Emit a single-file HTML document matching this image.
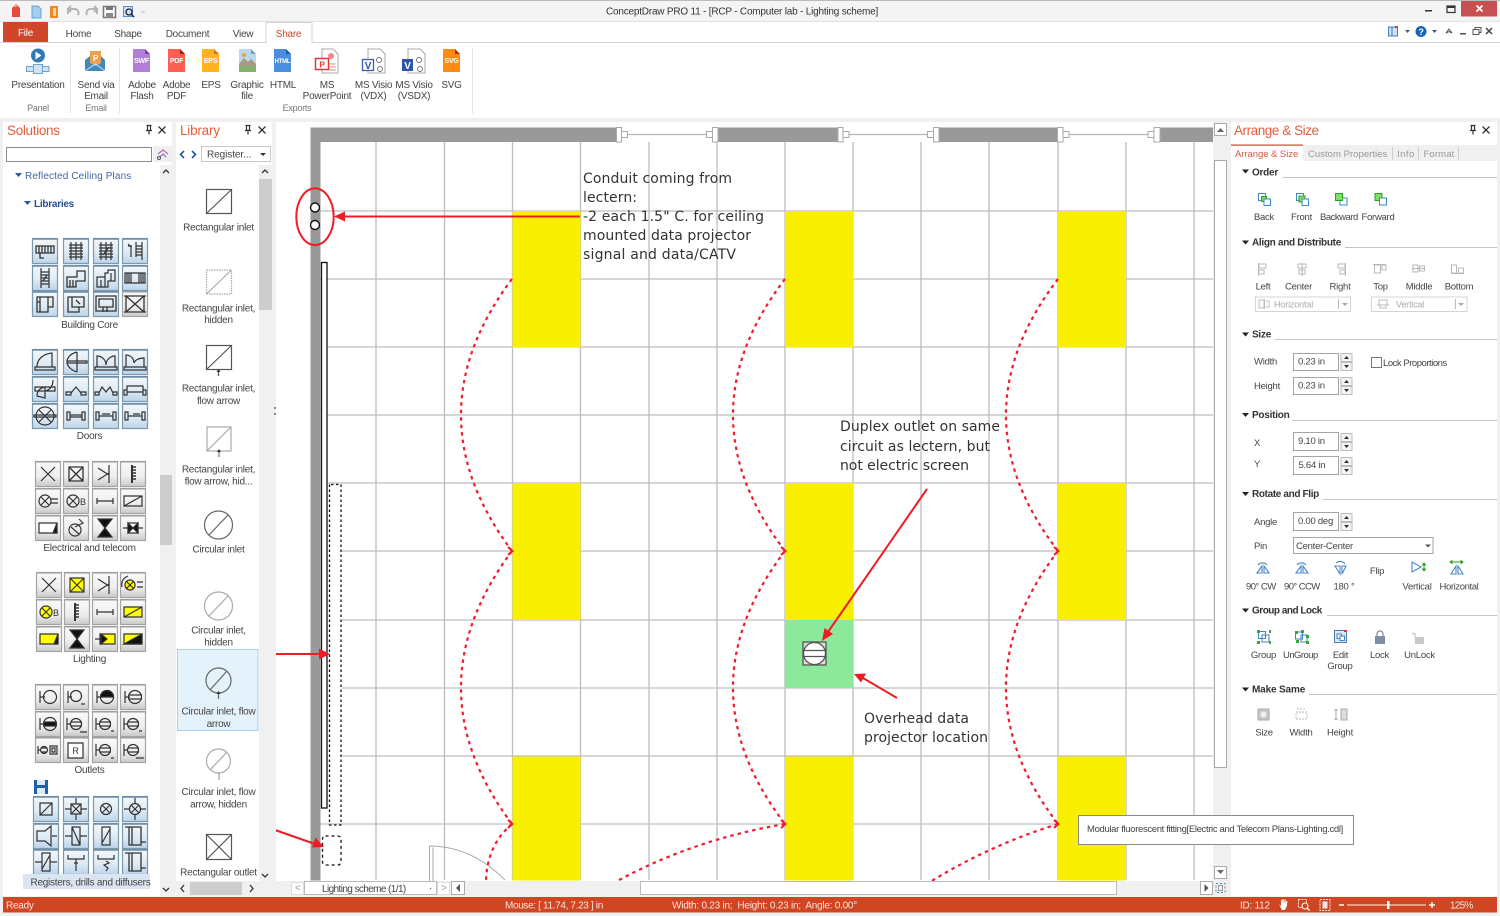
<!DOCTYPE html>
<html><head><meta charset="utf-8"><title>ConceptDraw PRO 11</title>
<style>
html,body{margin:0;padding:0;width:1500px;height:916px;overflow:hidden;background:#f0f0f0}
svg{display:block}
text{font-family:"Liberation Sans",sans-serif;font-size:10px;fill:#444;white-space:pre;letter-spacing:-.25px}
.m{text-anchor:middle}
.h{font-size:13.5px;fill:#e2603c;letter-spacing:0}
.b{font-weight:bold;fill:#333}
.w{fill:#fbe6de}
.d text{font-family:"DejaVu Sans",sans-serif;font-size:14px;fill:#333;letter-spacing:0}
.l{stroke:#bdbdbd;stroke-width:1.3;fill:none}
.r{stroke:#ee1c25;stroke-width:2;fill:none}
.rd{stroke:#f01c30;stroke-width:2.2;fill:none;stroke-dasharray:3.5 4}
.i{stroke-width:1.2}
.i path,.i circle{fill:none;stroke:#333}
.f{fill:#fff;stroke:#a5a5a5}
</style></head><body>
<svg width="1500" height="916" viewBox="0 0 1500 916" xmlns="http://www.w3.org/2000/svg">
<defs>
<linearGradient id="gb" x1="0" y1="0" x2="0" y2="1"><stop offset="0" stop-color="#f3f8fc"/><stop offset=".55" stop-color="#dfeaf4"/><stop offset="1" stop-color="#bcd5ea"/></linearGradient>
<linearGradient id="gg" x1="0" y1="0" x2="0" y2="1"><stop offset="0" stop-color="#fafafa"/><stop offset=".6" stop-color="#eee"/><stop offset="1" stop-color="#c9c9c9"/></linearGradient>
<g id="tb"><rect x=".5" y=".5" width="25" height="25" fill="url(#gb)" stroke="#7b98ad"/><path d="M1 1h24" stroke="#6d8ba3" stroke-width="1.5"/></g>
<g id="tg"><rect x=".5" y=".5" width="25" height="25" fill="url(#gg)" stroke="#a4a4a4"/><path d="M1 1h24" stroke="#999" stroke-width="1"/></g>
<path id="doc" d="M0 0h12l5 5v18H0z"/>
<g id="spin"><rect x=".5" y=".5" width="11" height="8" fill="#f4f4f4" stroke="#bbb"/><rect x=".5" y="9.5" width="11" height="8" fill="#f4f4f4" stroke="#bbb"/><path d="M3.5 6l2.5-3 2.5 3zM3.5 12l2.5 3 2.5-3z" fill="#333"/></g>
<g id="pin"><path d="M-2.5 -4.5h5M-1.5 -4.5v5M1.5 -4.5v5M-3 .5h6M0 .5v4" stroke="#333" stroke-width="1.2" fill="none"/></g>
<g id="xx"><path d="M-3.5 -3.5l7 7M3.5 -3.5l-7 7" stroke="#333" stroke-width="1.3"/></g>
<g id="ord"><rect x="0" y="0" width="7" height="7" fill="#7ee25c" stroke="#2e9e2a"/><rect x="4.5" y="4.5" width="7" height="7" fill="#fff" stroke="#3f86c6"/></g>
<g id="ord2"><rect x="4.5" y="4.5" width="7" height="7" fill="#fff" stroke="#3f86c6"/><rect x="0" y="0" width="7" height="7" fill="#7ee25c" stroke="#2e9e2a"/></g>
</defs>

<!-- canvas -->
<rect x="276" y="122" width="938" height="759" fill="#fff"/>
<g class="l">
<path d="M376 142V880M444.5 142V880M649 142V880M717 142V880M921 142V880M989 142V880M1194 142V880M512.5 142V880M580.5 142V880M785 142V880M853 142V880M1058 142V880M1126 142V880"/>
<path d="M320 211H1213M320 279H1213M327 347H1213M327 415H1213M327 483H1213M342 551H1213M342 620H1213M342 688H1213M342 756H1213M320 824H1213"/>
</g>
<g fill="#f9ef00">
<rect x="512.5" y="211" width="68" height="136.500"/><rect x="512.500" y="483" width="68" height="137"/><rect x="512.500" y="756.500" width="68" height="124"/>
<rect x="785" y="211" width="68.500" height="136.500"/><rect x="785" y="483" width="68.500" height="137"/><rect x="785" y="756.500" width="68.500" height="124"/>
<rect x="1058" y="211" width="68" height="136.500"/><rect x="1058" y="483" width="68" height="137"/><rect x="1058" y="756.500" width="68" height="124"/>
</g>
<rect x="785" y="620" width="68.500" height="68" fill="#8ce99c"/>
<!-- walls -->
<rect x="310.500" y="127.500" width="10" height="753" fill="#999"/>
<g fill="#999"><rect x="310.500" y="127.500" width="306" height="14.500"/><rect x="718" y="127.500" width="120" height="14.500"/><rect x="939" y="127.500" width="118" height="14.500"/><rect x="1160" y="127.500" width="53.500" height="14.500"/></g>
<g fill="#fff" stroke="#aaa">
<rect x="616.500" y="127.500" width="5" height="14.500"/><rect x="621.500" y="131.500" width="6" height="6"/><rect x="706.500" y="131.500" width="6" height="6"/><rect x="712.500" y="127.500" width="5.500" height="14.500"/>
<rect x="838" y="127.500" width="5" height="14.500"/><rect x="843" y="131.500" width="6" height="6"/><rect x="927.500" y="131.500" width="6" height="6"/><rect x="933.500" y="127.500" width="5.500" height="14.500"/>
<rect x="1057.500" y="127.500" width="5.500" height="14.500"/><rect x="1063" y="131.500" width="6" height="6"/><rect x="1148" y="131.500" width="6" height="6"/><rect x="1154" y="127.500" width="6" height="14.500"/>
</g>
<path d="M627.500 134.500H706.500M849 134.500H927.500M1069 134.500H1148" stroke="#b5b5b5" stroke-width="1.300"/>
<!-- lectern / screen -->
<circle cx="315" cy="207.500" r="4.500" fill="#fff" stroke="#111" stroke-width="1.400"/>
<circle cx="315" cy="225" r="4.500" fill="#fff" stroke="#111" stroke-width="1.400"/>
<ellipse cx="315" cy="216.700" rx="18.700" ry="28.300" class="r"/>
<path d="M345 216.500H580" class="r"/><path d="M334 216.500l11-5v10z" fill="#ee1c25"/>
<rect x="321.500" y="262.500" width="5.500" height="545.500" fill="#fff" stroke="#111" stroke-width="1.300"/>
<path d="M329.500 484.500V825H341V484.500z" fill="none" stroke="#111" stroke-width="1.300" stroke-dasharray="2.500 2.500"/>
<rect x="322.500" y="836" width="18.500" height="29" rx="3" fill="none" stroke="#111" stroke-width="1.300" stroke-dasharray="3 3"/>
<path d="M275 654H320M275 830L315 844" class="r"/>
<path d="M330 654l-11-5.500v11zM324 847l-12 .500 3.500-10z" fill="#ee1c25"/>
<!-- door -->
<path d="M429.500 881V846M433 881V847.500M429.500 846C460 846 485 860 505 880" fill="none" stroke="#aaa" stroke-width="1"/>
<!-- red dashed curves -->
<g class="rd">
<path d="M512 279Q410 415 512 551M512 551Q410 688 512 824M512 824Q487 845 486 881"/>
<path d="M785 279Q681 415 785 551M785 551Q681 688 785 824M785 824Q690 840 610 885"/>
<path d="M1058 279Q954 415 1058 551M1058 551Q954 688 1058 824M1058 824Q990 845 930 882"/>
</g>
<g fill="none" stroke="#f01c30" stroke-width="2">
<path d="M508 547l4.500 4-4.500 4M508 820l4.500 4-4.500 4M781 547l4.500 4-4.500 4M781 820l4.500 4-4.500 4M1054 547l4.500 4-4.500 4M1054 820l4.500 4-4.500 4"/>
</g>
<!-- device -->
<rect x="803" y="642" width="23" height="23" fill="#ddd" stroke="#555" stroke-width="1.300"/>
<circle cx="814.500" cy="653.500" r="11" fill="#fff" stroke="#555" stroke-width="1.300"/>
<path d="M804 650.500H825M804 656.500H825" stroke="#555" stroke-width="1.300"/>
<path d="M927 489L828 632M897 698L863 678" class="r"/>
<path d="M822 641l2.500-13 8.500 6zM854 674l12-.500-5 9z" fill="#ee1c25"/>
<!-- canvas text -->
<g class="d">
<text x="583" y="183" textLength="149">Conduit coming from</text>
<text x="583" y="202" textLength="54">lectern:</text>
<text x="583" y="221" textLength="181">-2 each 1.5" C. for ceiling</text>
<text x="583" y="240" textLength="168">mounted data projector</text>
<text x="583" y="259" textLength="153">signal and data/CATV</text>
<text x="840" y="431" textLength="160">Duplex outlet on same</text>
<text x="840" y="451" textLength="150">circuit as lectern, but</text>
<text x="840" y="470" textLength="129">not electric screen</text>
<text x="864" y="723" textLength="105">Overhead data</text>
<text x="864" y="742" textLength="124">projector location</text>
</g>

<!-- canvas scrollbars -->
<rect x="1213" y="122" width="15" height="759" fill="#f0f0f0"/>
<rect x="1214.500" y="123.500" width="12" height="12" fill="#fff" stroke="#aaa"/><path d="M1217 132l3.500-4 3.500 4z" fill="#666"/>
<rect x="1214.500" y="160.500" width="12" height="607" fill="#fff" stroke="#aaa"/>
<rect x="1214.500" y="866.500" width="12" height="12" fill="#fff" stroke="#aaa"/><path d="M1217 870l3.500 4 3.500-4z" fill="#666"/>
<rect x="276" y="881" width="952" height="15" fill="#f0f0f0"/>
<rect x="291.500" y="882.500" width="12" height="12" fill="#fff" stroke="#ddd"/><text x="295" y="891" style="fill:#999">&lt;</text>
<rect x="304.500" y="881.500" width="132" height="13" fill="#fff" stroke="#bbb"/>
<text x="322" y="892" textLength="84">Lighting scheme (1/1)</text><text x="429" y="891">·</text>
<rect x="437.500" y="882.500" width="12" height="12" fill="#fff" stroke="#ddd"/><text x="441" y="891" style="fill:#999">&gt;</text>
<rect x="451.500" y="881.500" width="13" height="13" fill="#fff" stroke="#aaa"/><path d="M460 884v8l-4-4z" fill="#555"/>
<rect x="640.500" y="881.500" width="476" height="13" fill="#fff" stroke="#bbb"/>
<rect x="1200.500" y="881.500" width="12" height="13" fill="#fff" stroke="#aaa"/><path d="M1204.500 884v8l4-4z" fill="#555"/>
<rect x="1216" y="883.500" width="9" height="9" fill="none" stroke="#4a83c0" stroke-dasharray="2 2"/><rect x="1218.500" y="885.500" width="4" height="5" fill="none" stroke="#999"/>

<!-- title bar -->
<rect x="0" y="0" width="1500" height="22" fill="#f4f4f4"/>
<rect x="0" y="0" width="1500" height="1" fill="#bbb"/>
<rect x="0" y="21.500" width="1500" height="1" fill="#d0d0d0"/>
<text x="606" y="14.500" textLength="272" style="fill:#333">ConceptDraw PRO 11 - [RCP - Computer lab - Lighting scheme]</text>
<path d="M12 17v-9l4-4 4 4v9z" fill="#e34a42"/><path d="M14 7l2-3 1 3z" fill="#f7b0a6"/>
<path d="M32 6h6l3 3v9h-9z" fill="#a7cdec" stroke="#6aa3d2"/>
<path d="M50 6h8v12h-8z" fill="#ec8a22"/><path d="M53 8h3v8h-3z" fill="#fbd6a5"/>
<path d="M68 14V9h7a4 4 0 0 1 3 6M68 9l3-3M68 9l3 3" fill="none" stroke="#b5b5b5" stroke-width="2"/>
<path d="M97 14V9h-7a4 4 0 0 0-3 6M97 9l-3-3M97 9l-3 3" fill="none" stroke="#b5b5b5" stroke-width="2"/>
<path d="M103.500 6.500h12v11h-12z" fill="#fff" stroke="#777" stroke-width="1.500"/><rect x="106" y="6" width="7" height="4" fill="#777"/><rect x="106" y="13" width="7" height="5" fill="#888"/>
<rect x="123.500" y="6.500" width="9" height="10" fill="#cfe3f5" stroke="#5a90c5"/><circle cx="129" cy="12" r="3" fill="none" stroke="#224" stroke-width="1.300"/><path d="M131 14l3 3" stroke="#224" stroke-width="1.500"/>
<path d="M140 11h6l-3 3z" fill="#d8d8d8"/>
<rect x="1425" y="10" width="7" height="1.500" fill="#333"/>
<rect x="1447" y="6" width="8" height="6.500" fill="none" stroke="#333" stroke-width="1.200"/><rect x="1447" y="6" width="8" height="2" fill="#333"/>
<rect x="1461" y="1" width="36" height="15.500" fill="#c75050"/><path d="M1476.500 5.500l6 6M1482.500 5.500l-6 6" stroke="#fff" stroke-width="1.600"/>

<!-- ribbon tabs -->
<rect x="0" y="22" width="1500" height="96" fill="#fff"/>
<rect x="0" y="42" width="1500" height="1" fill="#d4d4d4"/>
<rect x="3" y="22" width="45" height="20" fill="#d0462a"/>
<text x="25.500" y="36" class="m" style="fill:#fff">File</text>
<text x="78.500" y="37" class="m">Home</text><text x="128" y="37" class="m">Shape</text><text x="187.500" y="37" class="m">Document</text><text x="243" y="37" class="m">View</text>
<path d="M266 43V22.500H312V43" fill="#fff" stroke="#d4d4d4"/><rect x="267" y="41" width="44" height="3" fill="#fff"/>
<text x="288.500" y="37" class="m" style="fill:#d0462a">Share</text>
<rect x="1388.500" y="27" width="9" height="9" fill="#cfe0f2" stroke="#3d7cbd"/><path d="M1392 27v9" stroke="#3d7cbd"/><rect x="1395" y="26" width="3" height="2" fill="#d33"/>
<path d="M1405 30h5l-2.500 3z" fill="#556"/>
<circle cx="1421" cy="31.500" r="5.500" fill="#1565b8"/><text x="1421" y="35" class="m" style="fill:#fff;font-weight:bold;font-size:9px">?</text>
<path d="M1432 30h5l-2.500 3z" fill="#556"/>
<path d="M1446 33l3-4 3 4-3-1.500z" fill="none" stroke="#555"/>
<rect x="1460" y="33" width="6" height="1.500" fill="#555"/>
<path d="M1473 29.500h6v5h-6zM1475 29.500v-2h6v5h-2" fill="none" stroke="#555"/>
<path d="M1486 28l6 6M1492 28l-6 6" stroke="#444" stroke-width="1.500"/>
<!-- ribbon separators -->
<path d="M70.500 48v65M119.500 48v65M472.500 48v65" stroke="#e2e2e2"/>
<!-- ribbon icons -->
<circle cx="38" cy="55.500" r="7" fill="#2f7ab8"/><path d="M35.500 51.500v8l6-4z" fill="#fff"/>
<rect x="26.500" y="66.500" width="7" height="5" fill="#cfe3f3" stroke="#6ea3cc"/><rect x="33.500" y="64.500" width="9" height="9" fill="#cfe3f3" stroke="#6ea3cc"/><rect x="42.500" y="66.500" width="6.500" height="5" fill="#cfe3f3" stroke="#6ea3cc"/>
<path d="M85 60l5-4v-5h11v5l4 4v11H85z" fill="#3f89bd"/><path d="M90 51h11v12l-5.500 3-5.500-3z" fill="#f0a04b"/><text x="95.500" y="61" class="m" style="font-size:8px;fill:#fff;font-weight:bold">P</text><path d="M85 71l10.500-7 9.500 7" fill="none" stroke="#cfe3f3"/>
<g>
<use href="#doc" x="133" y="49" fill="#b27fd6"/><path d="M145 49l5 5h-5z" fill="#7a3fa8"/><text x="141.500" y="63" class="m" style="font-size:7px;fill:#fff;font-weight:bold">SWF</text>
<use href="#doc" x="168" y="49" fill="#ff5f52"/><path d="M180 49l5 5h-5z" fill="#b01818"/><text x="176.500" y="63" class="m" style="font-size:7px;fill:#fff;font-weight:bold">PDF</text>
<use href="#doc" x="202" y="49" fill="#ffb31c"/><path d="M214 49l5 5h-5z" fill="#e0701a"/><text x="210.500" y="63" class="m" style="font-size:7px;fill:#fff;font-weight:bold">EPS</text>
<use href="#doc" x="239" y="49" fill="#bcd8ee"/><path d="M251 49l5 5h-5z" fill="#6d9fc9"/><path d="M239 72V64l5-6 4 4 3-3 5 5v8z" fill="#a89a80"/><rect x="239" y="66" width="17" height="6" fill="#7fb46a"/><circle cx="244" cy="55" r="2" fill="#f0a030"/>
<use href="#doc" x="274" y="49" fill="#4a8fdf"/><path d="M286 49l5 5h-5z" fill="#1d5ca8"/><text x="282.500" y="63" class="m" style="font-size:6px;fill:#fff;font-weight:bold">HTML</text>
<path d="M322 49h11l5 5v19h-16z" fill="#fff" stroke="#aaa"/><path d="M329 64h7M329 67h7M329 70h7" stroke="#e88"/><rect x="315.500" y="58.500" width="13" height="11" fill="#fff" stroke="#e0383a" stroke-width="1.500"/><text x="322" y="67.500" class="m" style="font-size:8px;fill:#e0383a;font-weight:bold">P</text><circle cx="331" cy="56" r="3" fill="#e88"/>
<path d="M368 49h12l5 5v19h-17z" fill="#fff" stroke="#aaa"/><circle cx="379" cy="60" r="2.500" fill="none" stroke="#777"/><circle cx="380" cy="69" r="2.500" fill="none" stroke="#777"/><rect x="362.500" y="59.500" width="11" height="11" fill="#fff" stroke="#3a5ea8" stroke-width="1.300"/><text x="368" y="69" class="m" style="font-size:10px;fill:#2a4a9a;font-weight:bold">V</text>
<path d="M408 49h12l5 5v19h-17z" fill="#fff" stroke="#aaa"/><circle cx="419" cy="60" r="2.500" fill="none" stroke="#777"/><circle cx="420" cy="69" r="2.500" fill="none" stroke="#777"/><rect x="402" y="59" width="11" height="12" fill="#2f55a4"/><text x="407.500" y="69" class="m" style="font-size:10px;fill:#fff;font-weight:bold">V</text>
<use href="#doc" x="443" y="49" fill="#ff8a12"/><path d="M455 49l5 5h-5z" fill="#b32a10"/><text x="451.500" y="63" class="m" style="font-size:7px;fill:#fff;font-weight:bold">SVG</text>
</g>
<!-- ribbon text -->
<text x="38" y="88" class="m">Presentation</text>
<text x="96" y="88" class="m">Send via</text><text x="96" y="99" class="m">Email</text>
<text x="142" y="88" class="m">Adobe</text><text x="142" y="99" class="m">Flash</text>
<text x="176.500" y="88" class="m">Adobe</text><text x="176.500" y="99" class="m">PDF</text>
<text x="211" y="88" class="m">EPS</text>
<text x="247" y="88" class="m">Graphic</text><text x="247" y="99" class="m">file</text>
<text x="283" y="88" class="m">HTML</text>
<text x="327" y="88" class="m">MS</text><text x="327" y="99" class="m">PowerPoint</text>
<text x="373.500" y="88" class="m">MS Visio</text><text x="373.500" y="99" class="m">(VDX)</text>
<text x="414" y="88" class="m">MS Visio</text><text x="414" y="99" class="m">(VSDX)</text>
<text x="451.500" y="88" class="m">SVG</text>
<text x="38" y="111" class="m" style="font-size:9px;fill:#777">Panel</text><text x="96" y="111" class="m" style="font-size:9px;fill:#777">Email</text><text x="297" y="111" class="m" style="font-size:9px;fill:#777">Exports</text>

<!-- solutions panel -->
<rect x="3" y="122" width="169" height="774" fill="#fff"/>
<text x="7" y="135" class="h" textLength="53">Solutions</text>
<use href="#pin" x="149" y="130"/><use href="#xx" x="162" y="130"/>
<rect x="6.500" y="147.500" width="145" height="14" fill="#fff" stroke="#8c8c8c"/>
<rect x="153" y="146" width="19" height="16" fill="#efefef"/><path d="M158 154l5-4 5 4M160 157l3-3 3 3" fill="none" stroke="#b06fd0" stroke-width="1.300"/><circle cx="159" cy="158" r="1.500" fill="none" stroke="#555"/>
<rect x="160" y="165" width="12" height="731" fill="#f0f0f0"/>
<path d="M163 173l3-3 3 3" fill="none" stroke="#333" stroke-width="1.300"/>
<rect x="160" y="475" width="12" height="70" fill="#cdcdcd"/>
<path d="M163 888l3 3 3-3" fill="none" stroke="#333" stroke-width="1.300"/>
<path d="M15 173h7l-3.500 4z" fill="#1f5aa8"/>
<text x="25" y="179" textLength="106" style="fill:#3f68a6">Reflected Ceiling Plans</text>
<path d="M24 201h7l-3.500 4z" fill="#1f5aa8"/>
<text x="34" y="207" style="font-weight:bold;fill:#234f93">Libraries</text>

<!-- Building Core -->
<g class="i">
<g transform="translate(32,238)"><use href="#tb"/><path d="M4 8h18v7H4zM7 8v7M10 8v7M13 8v7M16 8v7M19 8v7M8 15v5h4" stroke-width="1.300"/></g>
<g transform="translate(63,238)"><use href="#tb"/><path d="M8 4v18M13 4v18M18 4v18M6 7h14M6 10h14M6 13h14M6 16h14M6 19h14"/></g>
<g transform="translate(93,238)"><use href="#tb"/><path d="M8 4v18M13 4v18M18 4v18M6 7h14M6 10h14M6 13h14M6 16h14M6 19h14M10 17l6-8"/></g>
<g transform="translate(122,238)"><use href="#tb"/><path d="M6 6l3 3v10M14 4v15M20 4v18M6 8h4M14 8h6M14 11h6M14 14h6M14 17h6"/></g>
<g transform="translate(32,265)"><use href="#tb"/><path d="M9 3v20M17 3v20M9 7h8M9 10h8M9 13h8M9 16h8M9 19h8M11 16l4-6"/></g>
<g transform="translate(63,265)"><use href="#tb"/><path d="M4 12h10V6h8v10h-9v6H4zM7 15v7M10 15v7" stroke-width="1.300"/></g>
<g transform="translate(93,265)"><use href="#tb"/><path d="M4 12h8V8h3V5h7v11h-7v6H4zM12 12v10M8 15v7M18 8v8" stroke-width="1.200"/></g>
<g transform="translate(122,265)"><use href="#tb"/><path d="M3 8h20v10H3zM9 8v10M17 8v10M5 8v10M7 8v10M19 8v10M21 8v10"/></g>
<g transform="translate(32,291)"><use href="#tb"/><path d="M5 6h16v10h-5v5H5zM16 6v10M8 6v15M5 11h3" stroke-width="1.300"/></g>
<g transform="translate(63,291)"><use href="#tb"/><path d="M5 6h16v10h-5v5H5zM9 6v10h7M13 9l4 4" stroke-width="1.300"/></g>
<g transform="translate(93,291)"><use href="#tb"/><path d="M3 5h20v15H3zM6 8h14v8H6zM10 16v5M14 16v5" stroke-width="1.300"/></g>
<g transform="translate(122,291)"><use href="#tg"/><path d="M4 5h18v16H4zM4 5l18 16M22 5L4 21M2 5h22M2 21h3M21 21h3" stroke-width="1.300"/></g>
</g>
<text x="89.500" y="328" class="m">Building Core</text>

<!-- Doors -->
<g class="i">
<g transform="translate(32,349)"><use href="#tb"/><path d="M5 18C5 10 11 5 20 4V18M3 18h20v3H3z"/></g>
<g transform="translate(63,349)"><use href="#tb"/><path d="M14 3v20M14 3C6 5 4 10 4 13s3 8 10 10M4 12h20v2H4z"/></g>
<g transform="translate(93,349)"><use href="#tb"/><path d="M4 18V7C9 7 13 11 13 16 13 11 17 7 22 7V18M2 18h22v3H2z"/></g>
<g transform="translate(122,349)"><use href="#tb"/><path d="M4 18V6C9 6 12 10 12 14 13 11 17 9 22 9V18M2 18h22v3H2z"/></g>
<g transform="translate(32,376)"><use href="#tb"/><path d="M3 11h20v4H3zM5 20C5 15 8 12 13 11V22zM13 15C18 14 21 10 21 4"/></g>
<g transform="translate(63,376)"><use href="#tb"/><path d="M3 16h5v3H3zM18 16h5v3h-5zM8 17l5-6 5 6"/></g>
<g transform="translate(93,376)"><use href="#tb"/><path d="M2 16h4v3H2zM20 16h4v3h-4zM6 17l3-6 4 5 4-5 3 6"/></g>
<g transform="translate(122,376)"><use href="#tb"/><path d="M2 14h3v5H2zM21 14h3v5h-3zM5 10h16v6H5zM5 16h16"/></g>
<g transform="translate(32,403)"><use href="#tb"/><circle cx="13" cy="13" r="9"/><path d="M7 7l12 12M19 7L7 19M2 12h22v2H2z"/></g>
<g transform="translate(63,403)"><use href="#tb"/><path d="M4 9h3v8H4zM19 9h3v8h-3zM7 12h12v2H7z"/></g>
<g transform="translate(93,403)"><use href="#tb"/><path d="M3 9h3v8H3zM20 9h3v8h-3zM6 13h14M9 11h8"/></g>
<g transform="translate(122,403)"><use href="#tb"/><path d="M3 9h3v8H3zM20 9h3v8h-3zM6 13h14M11 11h7" stroke="#666"/></g>
</g>
<text x="89.500" y="439" class="m">Doors</text>

<!-- Electrical -->
<g class="i">
<g transform="translate(35,461)"><use href="#tg"/><path d="M6 6l14 14M20 6L6 20"/></g>
<g transform="translate(63,461)"><use href="#tg"/><path d="M6 6h14v14H6zM6 6l14 14M20 6L6 20" stroke-width="1.300"/></g>
<g transform="translate(92,461)"><use href="#tg"/><path d="M17 4v18M6 7l11 7M6 19l11-7"/></g>
<g transform="translate(120,461)"><use href="#tg"/><path d="M12 4v18" stroke-width="2"/><path d="M12 6h4M12 9h4M12 12h4M12 15h4M12 18h4" stroke-width="1.500"/></g>
<g transform="translate(35,488)"><use href="#tg"/><circle cx="10" cy="13" r="6"/><path d="M6 9l8 8M14 9l-8 8M16 11h7M16 15h7"/></g>
<g transform="translate(63,488)"><use href="#tg"/><circle cx="10" cy="13" r="6"/><path d="M6 9l8 8M14 9l-8 8"/><text x="17" y="17" style="font-size:9px;fill:#333">B</text></g>
<g transform="translate(92,488)"><use href="#tg"/><path d="M5 13h16M5 10v6M21 10v6"/></g>
<g transform="translate(120,488)"><use href="#tg"/><path d="M4 8h18v10H4zM4 18L22 8" stroke-width="1.200"/></g>
<g transform="translate(35,515)"><use href="#tg"/><path d="M4 8h18v10H4z" style="fill:#fff"/><path d="M22 8l-4 10h4z" style="fill:#111"/></g>
<g transform="translate(63,515)"><use href="#tg"/><circle cx="12" cy="15" r="6"/><path d="M8 12l8 7M16 4l4 4-8 4"/></g>
<g transform="translate(92,515)"><use href="#tg"/><path d="M6 4h14L6 22h14z" style="fill:#111"/></g>
<g transform="translate(120,515)"><use href="#tg"/><path d="M3 13h5M18 13h5"/><path d="M8 8h10v10H8z" style="fill:#fff"/><path d="M8 8l10 10V8L8 18z" style="fill:#111"/></g>
</g>
<text x="89.500" y="551" class="m">Electrical and telecom</text>

<!-- Lighting -->
<g class="i">
<g transform="translate(36,572)"><use href="#tg"/><path d="M6 6l14 14M20 6L6 20"/></g>
<g transform="translate(64,572)"><use href="#tg"/><path d="M6 6h14v14H6z" style="fill:#ff0"/><path d="M6 6l14 14M20 6L6 20"/></g>
<g transform="translate(92,572)"><use href="#tg"/><path d="M17 4v18M6 7l11 7M6 19l11-7"/></g>
<g transform="translate(120,572)"><use href="#tg"/><circle cx="10" cy="13" r="5" style="fill:#ff0"/><path d="M6.500 9.500l7 7M13.500 9.500l-7 7M17 10h6M17 15h6M8 4C3 6 1 10 2 15"/></g>
<g transform="translate(36,599)"><use href="#tg"/><circle cx="10" cy="13" r="6" style="fill:#ff0"/><path d="M6 9l8 8M14 9l-8 8"/><text x="17" y="17" style="font-size:9px;fill:#333">B</text></g>
<g transform="translate(64,599)"><use href="#tg"/><path d="M11 4v18" stroke-width="2"/><path d="M11 6h4M11 9h4M11 12h4M11 15h4M11 18h4" stroke-width="1.500"/></g>
<g transform="translate(92,599)"><use href="#tg"/><path d="M5 13h16M5 10v6M21 10v6"/></g>
<g transform="translate(120,599)"><use href="#tg"/><path d="M4 8h18v10H4z" style="fill:#ff0"/><path d="M4 18L22 8"/></g>
<g transform="translate(36,626)"><use href="#tg"/><path d="M4 8h18v10H4z" style="fill:#ff0"/><path d="M22 8l-4 10h4z" style="fill:#111"/></g>
<g transform="translate(64,626)"><use href="#tg"/><path d="M6 4h14L6 22h14z" style="fill:#111"/></g>
<g transform="translate(92,626)"><use href="#tg"/><path d="M3 13h5M8 8h15v10H8z" style="fill:#ff0"/><path d="M9 8l6 5-6 5z" style="fill:#111"/></g>
<g transform="translate(120,626)"><use href="#tg"/><path d="M4 8h18v10H4z" style="fill:#ff0"/><path d="M22 8L4 18h18z" style="fill:#111"/></g>
</g>
<text x="89.500" y="662" class="m">Lighting</text>

<!-- Outlets -->
<g class="i">
<g transform="translate(35,684)"><use href="#tg"/><path d="M5 7v12M5 13h5"/><circle cx="15" cy="13" r="6.500"/></g>
<g transform="translate(63,684)"><use href="#tg"/><path d="M5 7v12M5 13h4"/><circle cx="13" cy="12" r="5.500"/><path d="M18 20h4"/></g>
<g transform="translate(92,684)"><use href="#tg"/><path d="M5 7v12M5 13h5"/><circle cx="15" cy="13" r="6.500"/><path d="M8.500 13a6.500 6.500 0 0 1 13 0z" style="fill:#111"/></g>
<g transform="translate(120,684)"><use href="#tg"/><path d="M5 7v12M5 13h5M9 11h13M9 15h13"/><circle cx="15" cy="13" r="6.500"/></g>
<g transform="translate(35,711)"><use href="#tg"/><path d="M5 7v12M5 13h5"/><circle cx="15" cy="13" r="6.500"/><path d="M9 11h12v4H9z" style="fill:#111"/></g>
<g transform="translate(63,711)"><use href="#tg"/><path d="M4 7v12M4 13h4M8 11h11M8 15h11M17 21h7"/><circle cx="13" cy="13" r="5.500"/></g>
<g transform="translate(92,711)"><use href="#tg"/><path d="M4 7v12M4 13h4M8 11h11M8 15h11M19 20h3"/><circle cx="13" cy="13" r="5.500"/></g>
<g transform="translate(120,711)"><use href="#tg"/><path d="M4 7v12M4 13h4M8 11h11M8 15h11M19 20h3"/><circle cx="13" cy="13" r="5.500"/></g>
<g transform="translate(35,737)"><use href="#tg"/><path d="M3 9v8M3 13h3M6 11h6M6 15h6M15 9h7v8h-7zM17 11h3v4h-3z"/><circle cx="9" cy="13" r="3.500"/></g>
<g transform="translate(63,737)"><use href="#tg"/><path d="M5 6h15v15H5z" style="fill:#fff"/><text x="12.500" y="17" class="m" style="font-size:9px;fill:#333">R</text></g>
<g transform="translate(92,737)"><use href="#tg"/><path d="M4 7v12M4 13h4M8 11h11M8 15h11M19 21h3"/><circle cx="13" cy="13" r="5.500"/></g>
<g transform="translate(120,737)"><use href="#tg"/><path d="M4 7v12M4 13h4M8 11h11M8 15h11M16 21h8"/><circle cx="13" cy="13" r="5.500"/></g>
</g>
<text x="89.500" y="773" class="m">Outlets</text>

<!-- Registers -->
<rect x="34" y="780" width="14" height="14" fill="#1e5fa8"/><rect x="37" y="780" width="8" height="5" fill="#dfe9f3"/><rect x="37" y="788" width="8" height="6" fill="#dfe9f3"/>
<g class="i">
<g transform="translate(33,796)"><use href="#tb"/><path d="M7 7h12v12H7zM7 19L19 7" stroke-width="1.200"/></g>
<g transform="translate(63,796)"><use href="#tb"/><path d="M8 8h10v10H8zM8 8l10 10M18 8L8 18M13 2v6M13 18v6M2 13h6M18 13h6"/></g>
<g transform="translate(93,796)"><use href="#tb"/><circle cx="13" cy="13" r="5.500"/><path d="M9.500 9.500l7 7M16.500 9.500l-7 7"/></g>
<g transform="translate(122,796)"><use href="#tb"/><circle cx="13" cy="13" r="5.500"/><path d="M9.500 9.500l7 7M16.500 9.500l-7 7M13 2v5M13 19v5M2 13h5M19 13h5"/></g>
<g transform="translate(33,823)"><use href="#tb"/><path d="M4 8h8l6-5v20l-6-5H4zM19 13h5"/></g>
<g transform="translate(63,823)"><use href="#tb"/><path d="M9 4h8v18H9zM9 4l8 18M2 13h7M17 13h7"/></g>
<g transform="translate(93,823)"><use href="#tb"/><path d="M9 4h8v18H9zM9 20l8-14" stroke-width="1.200"/></g>
<g transform="translate(122,823)"><use href="#tb"/><path d="M7 4h12v18H7zM10 4v18M3 4h4M19 19h5" stroke-width="1.300"/></g>
<g transform="translate(33,849)"><use href="#tb"/><path d="M9 4h8v18H9zM9 20l8-14M2 13h7M17 13h7" stroke-width="1.200"/></g>
<g transform="translate(63,849)"><use href="#tb"/><path d="M5 6v4h16V6M13 10v12M11 14h4"/></g>
<g transform="translate(93,849)"><use href="#tb"/><path d="M5 6v4h16V6M13 12l3 2-5 2 4 3-2 3"/></g>
<g transform="translate(122,849)"><use href="#tb"/><path d="M7 4h12v18H7zM10 4v18M3 4h4M19 19h5" stroke-width="1.300"/></g>
</g>
<rect x="23" y="874" width="127" height="15" fill="#dbe5f1"/>
<text x="30.500" y="885.500" textLength="120">Registers, drills and diffusers</text>

<!-- gap between panels -->
<rect x="172" y="122" width="4" height="774" fill="#f0f0f0"/>

<!-- library panel -->
<rect x="176" y="122" width="96" height="774" fill="#fff"/>
<rect x="272" y="122" width="4" height="774" fill="#f0f0f0"/>
<text x="180" y="135" class="h" textLength="40">Library</text>
<use href="#pin" x="248" y="130"/><use href="#xx" x="262" y="130"/>
<path d="M184 151l-3.500 3.500 3.500 3.500M192 151l3.500 3.500-3.500 3.500" fill="none" stroke="#1f5aa8" stroke-width="1.600"/>
<rect x="201.500" y="146.500" width="69" height="15" fill="#fff" stroke="#c9c9c9"/>
<text x="207" y="157.500" textLength="44">Register...</text><path d="M260 153h6l-3 3z" fill="#333"/>
<rect x="259" y="165" width="13" height="716" fill="#f0f0f0"/>
<path d="M262 173l3-3 3 3" fill="none" stroke="#333" stroke-width="1.300"/>
<rect x="259" y="179" width="13" height="131" fill="#cdcdcd"/>
<path d="M262 874l3 3 3-3" fill="none" stroke="#333" stroke-width="1.300"/>
<path d="M274 408h2M274 414h2" stroke="#222" stroke-width="1"/>
<rect x="176" y="881" width="96" height="15" fill="#f0f0f0"/>
<path d="M184 885l-3 3.500 3 3.500M250 885l3 3.500-3 3.500" fill="none" stroke="#333" stroke-width="1.300"/>
<rect x="190" y="882" width="52" height="13" fill="#cdcdcd"/>
<rect x="177.500" y="649.500" width="80.500" height="81" fill="#e4f2fb" stroke="#a6d2f2"/>
<g fill="none">
<g stroke="#555" stroke-width="1.200"><rect x="206.500" y="189.500" width="25" height="24"/><path d="M206.500 213.500l25-24"/></g>
<g stroke="#aaa" stroke-width="1.200"><rect x="206.500" y="270" width="25" height="24" stroke-dasharray="1.500 1"/><path d="M206.500 294l25-24"/></g>
<g stroke="#555" stroke-width="1.200"><rect x="206.500" y="345.500" width="25" height="24"/><path d="M206.500 369.500l25-24M218.500 376v-6"/></g>
<g stroke="#aaa" stroke-width="1.200"><rect x="207" y="427" width="24" height="24"/><path d="M207 451l24-24"/></g><path d="M219 457v-6" stroke="#555"/>
<g stroke="#666" stroke-width="1.200"><circle cx="218.500" cy="525" r="14"/><path d="M209 535l19-20"/></g>
<g stroke="#aaa" stroke-width="1.200"><circle cx="218.500" cy="606" r="14"/><path d="M209 616l19-20"/></g>
<g stroke="#666" stroke-width="1.200"><circle cx="218.500" cy="680.500" r="12.500"/><path d="M210 690l17-19M218.500 699v-6"/></g>
<g stroke="#aaa" stroke-width="1.200"><circle cx="218.500" cy="761" r="12"/><path d="M210 770l17-18"/></g><path d="M219 780v-7" stroke="#888"/>
<g stroke="#555" stroke-width="1.200"><rect x="206.500" y="834.500" width="25" height="25"/><path d="M206.500 834.500l25 25M231.500 834.500l-25 25"/></g>
</g>
<path d="M216.500 372l2-3 2 3zM217 452l2-3 2 3zM216.500 694l2-3 2 3z" fill="#333"/>
<g>
<text x="218.500" y="230.500" class="m">Rectangular inlet</text>
<text x="218.500" y="311.500" class="m">Rectangular inlet,</text><text x="218.500" y="323" class="m">hidden</text>
<text x="218.500" y="391.500" class="m">Rectangular inlet,</text><text x="218.500" y="404" class="m">flow arrow</text>
<text x="218.500" y="472.500" class="m">Rectangular inlet,</text><text x="218.500" y="484.500" class="m">flow arrow, hid...</text>
<text x="218.500" y="552.500" class="m">Circular inlet</text>
<text x="218.500" y="633.500" class="m">Circular inlet,</text><text x="218.500" y="645.500" class="m">hidden</text>
<text x="218.500" y="714.500" class="m">Circular inlet, flow</text><text x="218.500" y="727" class="m">arrow</text>
<text x="218.500" y="795" class="m">Circular inlet, flow</text><text x="218.500" y="807.500" class="m">arrow, hidden</text>
<text x="218.500" y="875.500" class="m">Rectangular outlet</text>
</g>

<!-- right panel -->
<rect x="1228" y="122" width="3" height="774" fill="#f0f0f0"/>
<rect x="1231" y="122" width="266" height="774" fill="#fff"/>
<text x="1234" y="135" class="h" textLength="85">Arrange &amp; Size</text>
<use href="#pin" x="1473" y="130"/><use href="#xx" x="1486" y="130"/>
<rect x="1231" y="145" width="266" height="16" fill="#f0f0f0"/>
<rect x="1231" y="145" width="72" height="16" fill="#fff"/><rect x="1231" y="144.500" width="72" height="1.200" fill="#d0462a"/>
<text x="1235" y="157" textLength="63" style="fill:#d9583a;font-size:9.500px">Arrange &amp; Size</text>
<text x="1308" y="157" textLength="79" style="fill:#999;font-size:9.500px">Custom Properties</text>
<text x="1397" y="157" textLength="17" style="fill:#999;font-size:9.500px">Info</text>
<text x="1423.500" y="157" textLength="30.500" style="fill:#999;font-size:9.500px">Format</text>
<path d="M1392.500 147v13M1418.500 147v13M1458.500 147v13" stroke="#d0d0d0"/>

<!-- headings -->
<g fill="#222">
<path d="M1242 169.500h7l-3.500 4zM1242 240.500h7l-3.500 4zM1242 332.500h7l-3.500 4zM1242 413h7l-3.500 4zM1242 492h7l-3.500 4zM1242 608.500h7l-3.500 4zM1242 687.500h7l-3.500 4z"/>
</g>
<text x="1252" y="175.500" class="b">Order</text>
<text x="1252" y="245.500" class="b" textLength="89">Align and Distribute</text>
<text x="1252" y="337.500" class="b">Size</text>
<text x="1252" y="418" class="b">Position</text>
<text x="1252" y="497" class="b" textLength="67">Rotate and Flip</text>
<text x="1252" y="613.500" class="b" textLength="70">Group and Lock</text>
<text x="1252" y="692.500" class="b" textLength="53">Make Same</text>
<path d="M1283 177.500H1497M1345 247.500H1497M1275 339.500H1497M1292 420.500H1497M1323 499.500H1497M1327 615.500H1497M1309 694.500H1497" stroke="#c4c4c4"/>

<!-- Order -->
<g transform="translate(1258,193)"><rect x=".5" y=".5" width="7" height="7" fill="#fff" stroke="#3f86c6"/><rect x="3.500" y="3.500" width="5" height="5" fill="#7ee25c" stroke="#2e9e2a"/><rect x="6" y="6" width="6.500" height="6.500" fill="#fff" stroke="#3f86c6"/></g>
<g transform="translate(1296,193)"><rect x="0.500" y="0.500" width="7" height="7" fill="#fff" stroke="#3f86c6"/><rect x="3" y="3" width="6" height="6" fill="#7ee25c" stroke="#2e9e2a"/><rect x="6" y="6" width="6.500" height="6.500" fill="#fff" stroke="#3f86c6"/></g>
<use href="#ord2" x="1335.500" y="193.500"/><use href="#ord" x="1375" y="193.500"/>
<text x="1264" y="220" class="m" style="font-size:9.500px">Back</text><text x="1301.500" y="220" class="m" style="font-size:9.500px">Front</text><text x="1339" y="220" class="m" textLength="38" style="font-size:9.500px">Backward</text><text x="1378" y="220" class="m" textLength="33" style="font-size:9.500px">Forward</text>

<!-- Align -->
<g fill="none" stroke="#b8b8b8">
<path d="M1258.500 263v13M1259 264h7v4h-7zM1259 270h5v4h-5z"/>
<path d="M1302 263v13M1298 264h8v4h-8zM1299 270h6v4h-6z"/>
<path d="M1345.500 263v13M1338 264h7v4h-7zM1340 270h5v4h-5z"/>
<path d="M1373 264.500h13M1374.500 265h6v8h-6zM1382 265h4v5h-4z"/>
<path d="M1412 268.500h13M1413 265h5v7h-5zM1419.500 266h5v5h-5z"/>
<path d="M1451 273.500h13M1451.500 265h5v8h-5zM1458.500 268h5v5h-5z"/>
</g>
<text x="1263" y="289.500" class="m" style="font-size:9.500px">Left</text><text x="1298.500" y="289.500" class="m" style="font-size:9.500px">Center</text><text x="1340" y="289.500" class="m" style="font-size:9.500px">Right</text><text x="1380.500" y="289.500" class="m" style="font-size:9.500px">Top</text><text x="1419" y="289.500" class="m" style="font-size:9.500px">Middle</text><text x="1459" y="289.500" class="m" style="font-size:9.500px">Bottom</text>
<rect x="1255.500" y="297" width="95" height="14.500" fill="#fff" stroke="#d4d4d4"/><rect x="1371.500" y="297" width="95.500" height="14.500" fill="#fff" stroke="#d4d4d4"/>
<path d="M1264.500 299v10M1259 300h5v8h-5zM1266 301h3v6h-3M1338.500 299v10M1455.500 299v10M1377 305h12M1379 300h8v5h-8zM1380 305h6v3h-6z" stroke="#bbb" fill="none"/>
<path d="M1342 303h6l-3 3zM1458 303h6l-3 3z" fill="#aaa"/>
<text x="1274" y="307.500" textLength="39" style="font-size:9px;fill:#aaa">Horizontal</text>
<text x="1396" y="307.500" textLength="28" style="font-size:9px;fill:#aaa">Vertical</text>

<!-- Size -->
<text x="1254" y="364.500" style="font-size:9.500px">Width</text><text x="1254" y="389" style="font-size:9.500px">Height</text>
<rect x="1293.500" y="353.500" width="45" height="17" class="f"/><rect x="1293.500" y="377.500" width="45" height="17" class="f"/>
<text x="1298" y="364.500" style="font-size:9.500px">0.23 in</text><text x="1298" y="388.500" style="font-size:9.500px">0.23 in</text>
<use href="#spin" x="1340.500" y="353"/><use href="#spin" x="1340.500" y="377"/>
<rect x="1371.500" y="357.500" width="10" height="10" fill="#fff" stroke="#777"/>
<text x="1383" y="366" textLength="64" style="font-size:9.500px">Lock Proportions</text>

<!-- Position -->
<text x="1254" y="446" style="font-size:9.500px">X</text><text x="1254" y="467" style="font-size:9.500px">Y</text>
<rect x="1293.500" y="432.500" width="45" height="18" class="f"/><rect x="1293.500" y="456.500" width="45" height="18" class="f"/>
<text x="1298" y="444" style="font-size:9.500px">9.10 in</text><text x="1298.500" y="468" style="font-size:9.500px">5.64 in</text>
<use href="#spin" x="1340.500" y="433"/><use href="#spin" x="1340.500" y="457"/>

<!-- Rotate -->
<text x="1254" y="525" style="font-size:9.500px">Angle</text><text x="1254" y="549" style="font-size:9.500px">Pin</text>
<rect x="1293.500" y="512.500" width="45" height="18" class="f"/>
<text x="1298" y="524" style="font-size:9.500px">0.00 deg</text>
<use href="#spin" x="1340.500" y="513"/>
<rect x="1293.500" y="537.500" width="139.500" height="16" class="f"/>
<text x="1296" y="549" style="font-size:9.500px">Center-Center</text>
<path d="M1425 544.500h6l-3 3z" fill="#555"/>
<g fill="none" stroke="#4b86c4" stroke-width="1.100">
<path d="M1257 573l5-7v7zM1264 573v-7l5 7zM1258 565a6 6 0 0 1 9 0" />
<path d="M1296 573l5-7v7zM1303 573v-7l5 7zM1297 565a6 6 0 0 1 9 0"/>
<path d="M1335 566h5l-0 8zM1342 574v-8h4zM1336 563a6 6 0 0 1 9 1"/>
<path d="M1412 562v10l9-5z"/>
<path d="M1451 574l5-8v8zM1458 574v-8l5 8z"/>
</g>
<path d="M1424 563v8M1424 563l-1.500 2h3zM1424 571l-1.500-2h3zM1450 562h13M1450 562l2-1.500v3zM1463 562l-2-1.500v3z" stroke="#2e9e2a" fill="#2e9e2a"/>
<text x="1377" y="574" class="m" style="font-size:9.500px">Flip</text>
<text x="1261" y="589.500" class="m" textLength="30" style="font-size:9.500px">90° CW</text><text x="1302" y="589.500" class="m" textLength="36" style="font-size:9.500px">90° CCW</text><text x="1344" y="589.500" class="m" style="font-size:9.500px">180 °</text><text x="1417" y="589.500" class="m" style="font-size:9.500px">Vertical</text><text x="1459" y="589.500" class="m" textLength="39" style="font-size:9.500px">Horizontal</text>

<!-- Group -->
<g fill="none" stroke="#3f86c6"><rect x="1258.500" y="631.500" width="7" height="7"/><rect x="1262" y="635" width="7" height="7"/>
<rect x="1295.500" y="632" width="7" height="7"/><rect x="1301" y="635" width="6" height="7"/>
<rect x="1334.500" y="630.500" width="12" height="12" fill="#dce8f3" stroke="#4f7ea6"/><rect x="1337" y="634" width="4.500" height="4.500" fill="#fff"/><rect x="1340" y="636" width="4.500" height="4.500" fill="#fff"/></g>
<path d="M1257 630h3v3h-3zM1269 630h2v3h-2zM1257 641h3v3h-3zM1269 641h2v3h-2zM1295 631h3v3h-3zM1301 630h3v3h-3zM1306 635h3v3h-3zM1296 640h3v3h-3zM1306 641h3v3h-3z" fill="#3ba53b"/>
<rect x="1344" y="630" width="3" height="2" fill="#d33"/>
<rect x="1375" y="636" width="10" height="8" fill="#7e8ea5"/><path d="M1377 636v-2a3 3 0 0 1 6 0v2" fill="none" stroke="#7e8ea5" stroke-width="1.300"/>
<rect x="1415" y="637" width="9" height="7" fill="#c4c8cc"/><path d="M1415 637v-3a2.500 2.500 0 0 0-3 0" fill="none" stroke="#c4c8cc" stroke-width="1.300"/>
<text x="1263.500" y="658" class="m" style="font-size:9.500px">Group</text><text x="1300.500" y="658" class="m" textLength="35" style="font-size:9.500px">UnGroup</text><text x="1340.500" y="658" class="m" style="font-size:9.500px">Edit</text><text x="1340" y="669" class="m" style="font-size:9.500px">Group</text><text x="1379.500" y="658" class="m" style="font-size:9.500px">Lock</text><text x="1419.500" y="658" class="m" style="font-size:9.500px">UnLock</text>

<!-- Make same -->
<rect x="1258" y="709" width="11" height="11" fill="#c6c6c6" stroke="#aaa"/><circle cx="1263.500" cy="714.500" r="3" fill="#eee"/>
<path d="M1297 709h9M1296 712h11v7h-11z" fill="none" stroke="#bbb" stroke-dasharray="2 1"/>
<rect x="1341" y="709" width="6" height="11" fill="#ddd" stroke="#aaa"/><path d="M1336 709v11M1334 710h4M1334 719h4" fill="none" stroke="#aaa"/>
<text x="1264" y="735.500" class="m" style="font-size:9.500px">Size</text><text x="1301" y="735.500" class="m" style="font-size:9.500px">Width</text><text x="1340" y="735.500" class="m" style="font-size:9.500px">Height</text>

<!-- tooltip -->
<rect x="1078.500" y="815.500" width="275" height="29" fill="#fff" stroke="#8a8a8a"/>
<text x="1087" y="832" textLength="256" style="font-size:9.500px">Modular fluorescent fitting[Electric and Telecom Plans-Lighting.cdl]</text>

<!-- status bar -->
<rect x="0" y="896" width="1500" height="20" fill="#f0f0f0"/>
<rect x="3" y="897" width="1494" height="15.500" fill="#d04623"/>
<text x="6" y="908.500" class="w">Ready</text>
<text x="505" y="908.500" class="w" textLength="98">Mouse: [ 11.74, 7.23 ] in</text>
<text x="672" y="908.500" class="w" textLength="185">Width: 0.23 in;  Height: 0.23 in;  Angle: 0.00°</text>
<text x="1240" y="908.500" class="w">ID: 112</text>
<path d="M1279 904l2 2v-6h1.200v4l.3-5h1.200l.3 5 .5-4.500h1.200l-.2 5 .8-3.500h1.100l-.5 5-2 4h-3z" fill="#fff"/>
<rect x="1298.500" y="899.500" width="8" height="8" fill="none" stroke="#fbe6de" stroke-dasharray="2 1"/><circle cx="1305" cy="906" r="3" fill="#d04623" stroke="#fff"/><path d="M1307 908l2.500 2.500" stroke="#fff" stroke-width="1.300"/>
<rect x="1320" y="899.500" width="10" height="11" fill="none" stroke="#fbe6de" stroke-dasharray="2 1"/><rect x="1322.500" y="901.500" width="5" height="7" fill="#fbe6de"/>
<path d="M1339 905h5" stroke="#fff" stroke-width="1.500"/>
<path d="M1347 905h79" stroke="#f3b7a3" stroke-width="1.400"/>
<rect x="1387" y="901" width="2.500" height="8" fill="#fff"/>
<path d="M1429 905h6M1432 902v6" stroke="#fff" stroke-width="1.500"/>
<text x="1450" y="908.500" class="w" textLength="23">125%</text>
</svg>
</body></html>
